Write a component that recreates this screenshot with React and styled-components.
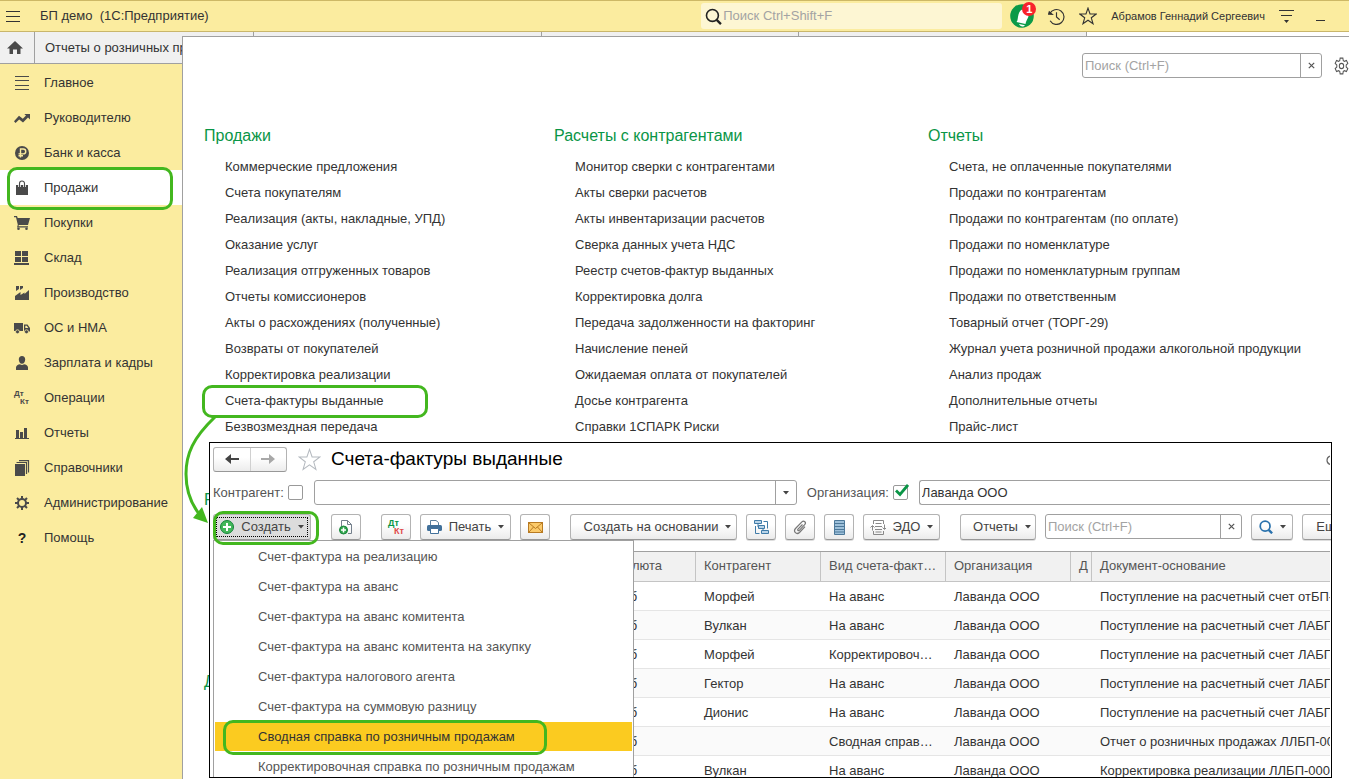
// Core
import React from 'react';
import styled, { createGlobalStyle, css } from 'styled-components';

const GREEN = '#43b71f';

const GlobalStyle = createGlobalStyle`
    * {
        box-sizing: border-box;
    }

    body {
        margin: 0;
        overflow: hidden;
        background-color: #fff;
        color: #333;
        font-family: 'Liberation Sans', Arial, sans-serif;
        font-size: 13px;
        line-height: 16px;
    }

    button,
    input {
        margin: 0;
        padding: 0;
        border: 0;
        background: none;
        color: inherit;
        font: inherit;
    }

    svg {
        display: block;
        flex: none;
    }

    ul {
        margin: 0;
        padding: 0;
        list-style: none;
    }

    a {
        color: inherit;
        text-decoration: none;
    }

    ::placeholder {
        color: #a3a3a3;
        opacity: 1;
    }
`;

const Page = styled.div`
    display: flex;
    flex-direction: column;
    height: 100vh;
    overflow: hidden;
`;

const Header = styled.header`
    display: flex;
    flex: none;
    align-items: center;
    height: 32px;
    padding: 0 24px 0 6px;
    border-top: 1px solid #cdb866;
    border-bottom: 1px solid #c9b66b;
    background-color: #fbec9f;
`;

const AppTitle = styled.h1`
    flex: 1;
    margin: 0 0 0 20px;
    font-size: 13px;
    font-weight: normal;
    white-space: pre;
`;

const HeaderSearch = styled.label`
    display: flex;
    align-items: center;
    width: 301px;
    height: 26px;
    padding-left: 4px;
    border-radius: 3px;
    background-color: #fdf6d3;

    input {
        flex: 1;
        min-width: 0;
        margin-left: 1px;
    }
`;

const HeaderTools = styled.div`
    display: flex;
    align-items: center;
    gap: 14px;
    margin-left: 8px;
    color: #333;
`;

const HeaderButton = styled.button`
    position: relative;
    display: flex;
`;

const Badge = styled.span`
    position: absolute;
    top: -1px;
    right: -2px;
    width: 14px;
    height: 14px;
    border-radius: 50%;
    background-color: #f8232b;
    color: #fff;
    font-size: 11px;
    font-weight: bold;
    line-height: 14px;
    text-align: center;
`;

const UserName = styled.a`
    font-size: 11px;
`;

const Tabs = styled.nav`
    display: flex;
    flex: none;
    height: 32px;
    border-bottom: 1px solid #a0a0a0;
`;

const Tab = styled.button`
    flex: none;
    width: ${ props => props.$width }px;
    padding-left: 10px;
    overflow: hidden;
    border-right: 1px solid #a0a0a0;
    background-color: #f0f0f0;
    text-align: left;
    white-space: nowrap;
`;

const HomeTab = styled(Tab)`
    padding-left: 7px;
`;

const Body = styled.div`
    display: flex;
    flex: 1;
    min-height: 0;
`;

const Sidebar = styled.nav`
    flex: none;
    width: 182px;
    padding-top: 1px;
    background-color: #fbec9f;
`;

const SidebarLink = styled.a`
    position: relative;
    display: flex;
    align-items: center;
    gap: 14px;
    height: 35px;
    padding-left: 14px;
    ${ props => props.$active && css`
        background-color: #fff;
    ` };

    svg {
        color: #4a4a4a;
    }
`;

const Highlight = styled.span`
    position: absolute;
    inset: ${ props => props.$inset };
    z-index: 3;
    border: 3px solid ${ GREEN };
    border-radius: 10px;
    pointer-events: none;
`;

const Panel = styled.main`
    position: relative;
    flex: 1;
    min-width: 0;
    margin-top: -28px;
    overflow: hidden;
    border-top: 1px solid #a0a0a0;
    border-left: 1px solid #a0a0a0;
    background-color: #fff;
`;

const PanelTools = styled.div`
    display: flex;
    align-items: center;
    justify-content: flex-end;
    gap: 12px;
    padding-top: 16px;
    color: #555;
`;

const Field = styled.div`
    display: flex;
    flex: ${ props => props.$width ? 'none' : 1 };
    width: ${ props => props.$width ? `${props.$width}px` : 'auto' };
    height: 25px;
    border: 1px solid #a0a0a0;
    border-right-width: ${ props => props.$open ? 0 : 1 }px;
    border-radius: ${ props => props.$open ? '3px 0 0 3px' : '3px' };
    background-color: #fff;

    input {
        flex: 1;
        min-width: 0;
        padding-left: 2px;
    }
`;

const FieldButton = styled.button`
    display: flex;
    align-items: center;
    justify-content: center;
    width: 21px;
    border-left: 1px solid #a0a0a0;
    color: #444;
`;

const Sections = styled.div`
    display: grid;
    grid-template-columns: 350px 374px 1fr;
    padding: 45px 0 0 21px;
`;

const SectionTitle = styled.h2`
    margin: 0 0 5px;
    color: #0a9546;
    font-size: 16px;
    font-weight: normal;
    line-height: 26px;
`;

const SectionList = styled.ul`
    min-height: 104px;
    margin-bottom: 47px;
    padding-left: 21px;
    line-height: 26px;
    white-space: nowrap;
`;

const SectionLink = styled.a`
    position: relative;
    display: inline-block;
`;

const Arrow = styled.svg`
    position: absolute;
    top: 379px;
    left: 0;
    z-index: 2;
`;

const Window = styled.section`
    position: absolute;
    inset: 405px 17px 1px 26px;
    padding: 3px 1px 0 3px;
    overflow: hidden;
    border: 1px solid #000;
    background-color: #fff;
`;

const TitleRow = styled.div`
    display: flex;
    align-items: center;
    height: 26px;
    color: #555;
`;

const NavButtons = styled.div`
    display: flex;
    width: 74px;
    height: 25px;
    margin-right: 11px;
    border: 1px solid #b3b3b3;
    border-bottom-color: #989898;
    border-radius: 3px;
    background: linear-gradient(#fff 40%, #ececec);

    button {
        display: flex;
        flex: 1;
        align-items: center;
        justify-content: center;
        color: #444;
    }

    button + button {
        border-left: 1px solid #d0d0d0;
        color: #a8a8a8;
    }
`;

const WindowTitle = styled.h2`
    flex: 1;
    margin: 0 0 0 10px;
    color: #000;
    font-size: 19px;
    font-weight: normal;
    line-height: 24px;
`;

const FilterRow = styled.div`
    display: flex;
    align-items: center;
    margin-top: 8px;
`;

const FilterLabel = styled.label`
    display: flex;
    align-items: center;
    gap: 4px;
    margin-right: 11px;
    color: #555;
    white-space: nowrap;

    ${ Field } + & {
        margin-left: 10px;
    }
`;

const CheckBox = styled.span`
    position: relative;
    display: flex;

    input {
        width: 15px;
        height: 15px;
        border: 1px solid #999;
        border-radius: 2px;
        appearance: none;
    }

    svg {
        position: absolute;
        top: -1px;
        left: 2px;
        display: none;
    }

    input:checked + svg {
        display: block;
    }
`;

const Toolbar = styled.div`
    display: flex;
    gap: 20px;
    margin-top: 9px;
`;

const ToolGroup = styled.div`
    position: relative;
    display: flex;
    flex: none;
    gap: 9px;
`;

const ToolButton = styled.button`
    display: flex;
    flex: none;
    align-items: center;
    justify-content: center;
    gap: 7px;
    width: ${ props => props.$width || 30 }px;
    height: 26px;
    border: 1px solid #b3b3b3;
    border-bottom-color: #989898;
    border-radius: 3px;
    background: linear-gradient(#fff 40%, #ebebeb);
    box-shadow: 0 1px 0 #ddd;
    color: #444;
    white-space: nowrap;
`;

const TextButton = styled(ToolButton)`
    padding-left: 8px;
`;

const CreateButton = styled(ToolButton)`
    background: #dcdcdc;
    outline: 1px dotted #000;
    outline-offset: -4px;
`;

const Postings = styled.span`
    display: flex;
    flex-direction: column;
    color: #0a9546;
    font-size: 9px;
    font-weight: bold;
    line-height: 8px;
    text-align: left;

    span + span {
        padding-left: 6px;
        color: ${ props => props.$plain ? 'inherit' : '#e04a4a' };
    }
    ${ props => props.$plain && css`
        width: 16px;
        color: #4a4a4a;
        font-size: 8px;
    ` };
`;

const HelpMark = styled.span`
    width: 16px;
    color: #222;
    font-size: 14px;
    font-weight: bold;
    text-align: center;
`;

const Menu = styled.ul`
    position: absolute;
    top: 97px;
    left: 3px;
    width: 421px;
    padding: 1px;
    border: 1px solid #a0a0a0;
    background-color: #fff;
`;

const MenuItem = styled.button`
    position: relative;
    display: block;
    width: 100%;
    height: 29px;
    margin-bottom: 1px;
    padding-left: 43px;
    background-color: ${ props => props.$selected ? '#fbcb20' : 'transparent' };
    color: ${ props => props.$selected ? '#333' : '#555' };
    text-align: left;
`;

const Table = styled.table`
    width: 100%;
    margin-top: 11px;
    border-collapse: separate;
    border-spacing: 0;
    border-top: 1px solid #a0a0a0;
    table-layout: fixed;

    th,
    td {
        height: 29px;
        padding: 1px 8px 0;
        overflow: hidden;
        border-bottom: 1px solid #e5e5e5;
        font-weight: normal;
        text-align: left;
        text-overflow: ellipsis;
        white-space: nowrap;
    }

    th {
        height: 30px;
        padding-top: 0;
        padding-bottom: 1px;
        border-right: 1px solid #c4c4c4;
        border-bottom-color: #c4c4c4;
        background-color: #f1f1f1;
        color: #555;
    }

    th:nth-last-child(-n + 2) {
        text-overflow: clip;
    }

    th:last-child,
    td:last-child {
        padding-right: 0;
        border-right: 0;
        text-overflow: clip;
    }

    tbody tr:nth-child(even) {
        background-color: #fafafa;
    }
`;

const Icon = ({ size = 16, children }) => (
    <svg width = { size } height = { size } viewBox = '0 0 16 16' fill = 'currentColor' aria-hidden = 'true'>
        { children }
    </svg>
);

const Caret = () => (
    <svg width = '6' height = '4' viewBox = '0 0 6 4' fill = '#444' aria-hidden = 'true'>
        <path d = 'M0 0h6L3 3.5z' />
    </svg>
);

const Cross = () => (
    <svg width = '7' height = '7' viewBox = '0 0 7 7' stroke = '#555' strokeWidth = '1.2' aria-hidden = 'true'>
        <path d = 'M.8.8l5.4 5.4M6.2.8L.8 6.2' />
    </svg>
);

const Lens = ({ size = 16, color = '#222', width = 1.5 }) => (
    <svg width = { size } height = { size } viewBox = '0 0 16 16' fill = 'none' stroke = { color } strokeWidth = { width } aria-hidden = 'true'>
        <circle cx = '7' cy = '7' r = '5.6' />
        <path d = 'M11 11.2l4 4' strokeWidth = { width + 0.7 } />
    </svg>
);

const Star = ({ size, color, width }) => (
    <svg width = { size } height = { size } viewBox = '0 0 24 24' fill = 'none' stroke = { color } strokeWidth = { width } aria-hidden = 'true'>
        <path d = 'M12 1.5l2.7 7.8 8.2.1-6.5 5 2.3 7.9-6.7-4.7-6.7 4.7 2.3-7.9-6.5-5 8.2-.1z' />
    </svg>
);

const Gear = () => (
    <svg width = '15' height = '18' viewBox = '0 0 24 24' preserveAspectRatio = 'none' fill = 'none' stroke = '#555' strokeWidth = '1.6' aria-hidden = 'true'>
        <circle cx = '12' cy = '12' r = '3.5' />
        <path d = 'M9.8 1.5h4.4l.6 3.3 2 1.1 3.1-1.2 2.2 3.8-2.6 2.2v2.6l2.6 2.2-2.2 3.8-3.1-1.2-2 1.1-.6 3.3H9.8l-.6-3.3-2-1.1-3.1 1.2-2.2-3.8 2.6-2.2v-2.6L1.9 8.5l2.2-3.8 3.1 1.2 2-1.1z' />
    </svg>
);

const Bell = () => (
    <svg width = '24' height = '26' viewBox = '0 0 24 26' aria-hidden = 'true'>
        <circle cx = '12' cy = '13' r = '11.8' fill = '#0c9a48' />
        <path d = 'M6.500 19c1.500-1.500 1-4 2-7.500C9.300 8 11.500 6 14 6.500c3 .800 5 3.500 4.500 6.500-.4 2.500-2 3.500-3 8z' fill = '#fff' />
        <path d = 'M9 21l6 1.200c-1.500 2-5 1.600-6-1.200z' fill = '#fff' />
    </svg>
);

const sidebarItems = [
    {
        title: 'Главное',
        icon:  <Icon><path d = 'M1 1h14v1H1zM1 5h14v1H1zM1 10h14v1H1zM1 14h14v1H1z' /></Icon>,
    },
    {
        title: 'Руководителю',
        icon:  <Icon><path d = 'M0 11.200l5-5.400 3.800 3 3.200-3.300L10.300 4H16v5.500l-2-2-5 5-3.800-3L1.500 13z' /></Icon>,
    },
    {
        title: 'Банк и касса',
        icon:  (
            <Icon>
                <circle cx = '8' cy = '8' r = '7' />
                <path d = 'M6.500 12.500V4h2.800a2.400 2.400 0 010 4.900H4.500M4.500 10.700h4.500' fill = 'none' stroke = '#fbec9f' strokeWidth = '1.4' />
            </Icon>
        ),
    },
    {
        title:  'Продажи',
        active: true,
        icon:   (
            <Icon>
                <path d = 'M2 5h12v10H2z' />
                <path d = 'M5.500 7V3.500a2.500 2.500 0 015 0V7' fill = 'none' stroke = '#fff' strokeWidth = '2.6' />
                <path d = 'M5.500 7V3.500a2.500 2.500 0 015 0V7' fill = 'none' stroke = 'currentColor' strokeWidth = '1.1' />
            </Icon>
        ),
    },
    {
        title: 'Покупки',
        icon:  (
            <Icon>
                <path d = 'M0 1h3l.7 2H16l-2 7H4.800l-.3 1.200H14v1.300H3l.8-2.700L2 2.300H0z' />
                <circle cx = '4.500' cy = '13.800' r = '1.300' />
                <circle cx = '12.500' cy = '13.800' r = '1.300' />
            </Icon>
        ),
    },
    {
        title: 'Склад',
        icon:  <Icon><path d = 'M1 1h6v5H1zM8 1h6v5H8zM1 7h6v5H1zM8 7h6v5H8zM0 13h15v2H0z' /></Icon>,
    },
    {
        title: 'Производство',
        icon:  <Icon><path d = 'M1 15v-4l5.500-4v3L10.500 7.500V9L15 5v10zM2 1h3v3L2 6zM6 1h3v2L6 5z' /></Icon>,
    },
    {
        title: 'ОС и НМА',
        icon:  (
            <Icon>
                <path d = 'M0 3h9v8H0zM10 4.500h3.500L16 8v3.500h-6zM11.300 5.800V8h3l-1.500-2.200z' fillRule = 'evenodd' />
                <circle cx = '3.500' cy = '11.800' r = '2' stroke = '#fbec9f' strokeWidth = '.8' />
                <circle cx = '12.500' cy = '11.800' r = '2' stroke = '#fbec9f' strokeWidth = '.8' />
            </Icon>
        ),
    },
    {
        title: 'Зарплата и кадры',
        icon:  <Icon><path d = 'M8 1c2 0 3.200 1.300 3.200 3.400S9.900 8.800 8 8.800 4.800 6.500 4.800 4.400 6 1 8 1zM2 15v-2.500C2 10.500 4 9.600 6 9.300c1 .9 3 .9 4 0 2 .3 4 1.200 4 3.200V15z' /></Icon>,
    },
    {
        title: 'Операции',
        icon:  <Postings $plain><span>Дт</span><span>Кт</span></Postings>,
    },
    {
        title: 'Отчеты',
        icon:  <Icon><path d = 'M2 5h3v8H2zM6 7h3v6H6zM10 3h3v10h-3zM1 13h14v1H1z' /></Icon>,
    },
    {
        title: 'Справочники',
        icon:  (
            <Icon>
                <path d = 'M1 4h10v12H1z' />
                <path d = 'M2.500 2.500h10V14M5 .600h9.500V12.500' fill = 'none' stroke = 'currentColor' strokeWidth = '1.200' />
            </Icon>
        ),
    },
    {
        title: 'Администрирование',
        icon:  (
            <Icon>
                <circle cx = '8' cy = '8' r = '4' fill = 'none' stroke = 'currentColor' strokeWidth = '2' />
                <path d = 'M8 1v3M8 12v3M1 8h3M12 8h3M3 3l2.200 2.200M10.800 10.800L13 13M13 3l-2.200 2.200M5.200 10.800L3 13' stroke = 'currentColor' strokeWidth = '2' />
            </Icon>
        ),
    },
    {
        title: 'Помощь',
        icon:  <HelpMark>?</HelpMark>,
    },
];

const columns = [
    [
        {
            title: 'Продажи',
            items: [
                'Коммерческие предложения',
                'Счета покупателям',
                'Реализация (акты, накладные, УПД)',
                'Оказание услуг',
                'Реализация отгруженных товаров',
                'Отчеты комиссионеров',
                'Акты о расхождениях (полученные)',
                'Возвраты от покупателей',
                'Корректировка реализации',
                'Счета-фактуры выданные',
                'Безвозмездная передача',
            ],
        },
        { title: 'Розничные продажи', items: []},
        { title: 'Дополнительно', items: []},
    ],
    [
        {
            title: 'Расчеты с контрагентами',
            items: [
                'Монитор сверки с контрагентами',
                'Акты сверки расчетов',
                'Акты инвентаризации расчетов',
                'Сверка данных учета НДС',
                'Реестр счетов-фактур выданных',
                'Корректировка долга',
                'Передача задолженности на факторинг',
                'Начисление пеней',
                'Ожидаемая оплата от покупателей',
                'Досье контрагента',
                'Справки 1СПАРК Риски',
            ],
        },
    ],
    [
        {
            title: 'Отчеты',
            items: [
                'Счета, не оплаченные покупателями',
                'Продажи по контрагентам',
                'Продажи по контрагентам (по оплате)',
                'Продажи по номенклатуре',
                'Продажи по номенклатурным группам',
                'Продажи по ответственным',
                'Товарный отчет (ТОРГ-29)',
                'Журнал учета розничной продажи алкогольной продукции',
                'Анализ продаж',
                'Дополнительные отчеты',
                'Прайс-лист',
            ],
        },
    ],
];

const createMenu = [
    'Счет-фактура на реализацию',
    'Счет-фактура на аванс',
    'Счет-фактура на аванс комитента',
    'Счет-фактура на аванс комитента на закупку',
    'Счет-фактура налогового агента',
    'Счет-фактура на суммовую разницу',
    'Сводная справка по розничным продажам',
    'Корректировочная справка по розничным продажам',
];

const invoices = [
    ['Морфей', 'На аванс', 'Поступление на расчетный счет отБП-000001'],
    ['Вулкан', 'На аванс', 'Поступление на расчетный счет ЛАБП-000002'],
    ['Морфей', 'Корректировочный', 'Поступление на расчетный счет ЛАБП-000003'],
    ['Гектор', 'На аванс', 'Поступление на расчетный счет ЛАБП-000004'],
    ['Дионис', 'На аванс', 'Поступление на расчетный счет ЛАБП-000005'],
    ['', 'Сводная справка по продажам', 'Отчет о розничных продажах ЛЛБП-000001'],
    ['Вулкан', 'На аванс', 'Корректировка реализации ЛЛБП-000001'],
];

const AppHeader = () => (
    <Header>
        <HeaderButton aria-label = 'Меню'>
            <svg width = '14' height = '11' viewBox = '0 0 14 11' fill = '#333'>
                <path d = 'M0 0h14v1H0zM0 5h14v1H0zM0 10h14v1H0z' />
            </svg>
        </HeaderButton>
        <AppTitle>{ 'БП демо  (1С:Предприятие)' }</AppTitle>
        <HeaderSearch>
            <Lens size = { 17 } />
            <input type = 'text' placeholder = 'Поиск Ctrl+Shift+F' aria-label = 'Поиск' />
        </HeaderSearch>
        <HeaderTools>
            <HeaderButton aria-label = 'Уведомления'>
                <Bell />
                <Badge>1</Badge>
            </HeaderButton>
            <HeaderButton aria-label = 'История'>
                <svg width = '17' height = '17' viewBox = '0 0 16 16' fill = 'none' stroke = '#333' strokeWidth = '1.1'>
                    <path d = 'M1.700 5.500A7 7 0 112 12M8 4v4.500l3 2.500M.500 5.800l3.500.2-2.800-2.500z' />
                </svg>
            </HeaderButton>
            <HeaderButton aria-label = 'Избранное'>
                <Star size = { 18 } color = '#333' width = { 1.5 } />
            </HeaderButton>
            <UserName href = '#user'>Абрамов Геннадий Сергеевич</UserName>
            <HeaderButton aria-label = 'Настройки'>
                <svg width = '15' height = '13' viewBox = '0 0 15 13' fill = '#333'>
                    <path d = 'M0 0h15v1H0zM2 5h11v1H2zM5 10h5l-2.500 3z' />
                </svg>
            </HeaderButton>
            <HeaderButton aria-label = 'Свернуть'>
                <svg width = '17' height = '11' viewBox = '0 0 17 11' fill = '#333'>
                    <path d = 'M8 9h9v1H8z' />
                </svg>
            </HeaderButton>
        </HeaderTools>
    </Header>
);

const InvoiceTable = () => (
    <Table>
        <colgroup>
            <col width = '395' />
            <col width = '88' />
            <col width = '125' />
            <col width = '125' />
            <col width = '125' />
            <col width = '21' />
            <col />
        </colgroup>
        <thead>
            <tr>
                <th />
                <th>Валюта</th>
                <th>Контрагент</th>
                <th>Вид счета-фактуры</th>
                <th>Организация</th>
                <th>Д</th>
                <th>Документ-основание</th>
            </tr>
        </thead>
        <tbody>
            { invoices.map(([partner, kind, source], index) => (
                <tr key = { index }>
                    <td />
                    <td>руб</td>
                    <td>{ partner }</td>
                    <td>{ kind }</td>
                    <td>Лаванда ООО</td>
                    <td />
                    <td>{ source }</td>
                </tr>
            )) }
        </tbody>
    </Table>
);

const InvoiceToolbar = () => (
    <Toolbar>
        <ToolGroup>
            <CreateButton $width = { 98 }>
                <svg width = '14' height = '14' viewBox = '0 0 14 14'>
                    <circle cx = '7' cy = '7' r = '6.500' fill = '#43b75a' stroke = '#16853a' />
                    <path d = 'M7 3v8M3 7h8' stroke = '#fff' strokeWidth = '2' />
                </svg>
                Создать
                <Caret />
            </CreateButton>
            <Highlight $inset = '-3px -8px -5px 0' />
        </ToolGroup>
        <ToolGroup>
            <ToolButton aria-label = 'Скопировать'>
                <svg width = '14' height = '16' viewBox = '0 0 14 16' fill = 'none'>
                    <path d = 'M2.500 7V1.500h6l4 4v9H9' stroke = '#74808c' />
                    <path d = 'M8.500 1.500v4h4' stroke = '#74808c' />
                    <circle cx = '4.500' cy = '11' r = '4' fill = '#2fa44a' stroke = '#16853a' />
                    <path d = 'M4.500 8.500v5M2 11h5' stroke = '#fff' strokeWidth = '1.500' />
                </svg>
            </ToolButton>
        </ToolGroup>
        <ToolGroup>
            <ToolButton aria-label = 'Дт Кт'>
                <Postings><span>Дт</span><span>Кт</span></Postings>
            </ToolButton>
            <ToolButton $width = { 91 }>
                <svg width = '15' height = '14' viewBox = '0 0 15 14'>
                    <path d = 'M3.500 5V.500H9l2.500 2V5' fill = '#fff' stroke = '#5b7f9c' />
                    <rect y = '5' width = '15' height = '6' rx = '1.500' fill = '#41709a' />
                    <path d = 'M3.500 8.500h8v5h-8z' fill = '#fff' stroke = '#41709a' />
                </svg>
                Печать
                <Caret />
            </ToolButton>
            <ToolButton aria-label = 'Отправить'>
                <svg width = '15' height = '11' viewBox = '0 0 15 11' stroke = '#b87a22'>
                    <rect x = '.500' y = '.500' width = '14' height = '10' fill = '#fbca6a' />
                    <path d = 'M1 1l6.500 5.500L14 1M1 10l4.500-5M14 10L9.500 5' fill = 'none' />
                </svg>
            </ToolButton>
        </ToolGroup>
        <ToolGroup>
            <TextButton $width = { 167 }>
                Создать на основании
                <Caret />
            </TextButton>
            <ToolButton aria-label = 'Структура подчиненности'>
                <svg width = '15' height = '15' viewBox = '0 0 15 15' fill = '#b9d4e8' stroke = '#3f7ba8'>
                    <path d = 'M.500.500h7v3h-7zM4.500 5.500h6v3h-6zM7.500 10.500h7v3h-7z' />
                    <path d = 'M9.500 1.500h4v7M1.500 6v7.500h4M4 3.500V7M9 8.500v2' fill = 'none' />
                </svg>
            </ToolButton>
            <ToolButton aria-label = 'Присоединенные файлы'>
                <svg width = '15' height = '15' viewBox = '0 0 15 15' fill = 'none' stroke = '#777' strokeWidth = '1.200'>
                    <path d = 'M9.500 4.500L5 9.200c-.8 1 .5 2 1.300 1.200l5.400-5.700c2-2.200-.8-4.800-2.800-2.800L2.500 8.500c-2.600 3 1 6.600 4 4l5.500-5.800' />
                </svg>
            </ToolButton>
            <ToolButton aria-label = 'Реестр'>
                <svg width = '11' height = '15' viewBox = '0 0 11 15' fill = '#9dc0da' stroke = '#4c7899'>
                    <path d = 'M.500.500h10v14H.500zM.500 3.500h10M.500 6.500h10M.500 9.500h10M.500 12h10' />
                </svg>
            </ToolButton>
            <ToolButton $width = { 77 }>
                <svg width = '16' height = '15' viewBox = '0 0 16 15' fill = 'none' stroke = '#888'>
                    <path d = 'M3.500 4V.500h10V4M3.500 11v3.500h10V11M5.500 3.500h6M5 6.500h7M5 9.500h7M5.500 12h6M2.500 10.500V6M.500 7.500l2-2 2 2M14.500 4.500V9M12.500 7.500l2 2 2-2' />
                </svg>
                ЭДО
                <Caret />
            </ToolButton>
        </ToolGroup>
        <ToolGroup>
            <TextButton $width = { 76 }>
                Отчеты
                <Caret />
            </TextButton>
            <Field $width = { 197 }>
                <input type = 'text' placeholder = 'Поиск (Ctrl+F)' aria-label = 'Поиск в списке' />
                <FieldButton aria-label = 'Очистить'><Cross /></FieldButton>
            </Field>
            <ToolButton $width = { 42 } aria-label = 'Найти'>
                <Lens size = { 14 } color = '#2a72ad' width = { 2 } />
                <Caret />
            </ToolButton>
            <TextButton $width = { 60 }>
                Еще
                <Caret />
            </TextButton>
        </ToolGroup>
    </Toolbar>
);

const InvoiceWindow = () => (
    <Window>
        <TitleRow>
            <NavButtons>
                <button aria-label = 'Назад'>
                    <svg width = '14' height = '10' viewBox = '0 0 14 10' fill = 'currentColor'>
                        <path d = 'M0 5l6-5v4h8v2H6v4z' />
                    </svg>
                </button>
                <button aria-label = 'Вперед'>
                    <svg width = '14' height = '10' viewBox = '0 0 14 10' fill = 'currentColor'>
                        <path d = 'M14 5L8 0v4H0v2h8v4z' />
                    </svg>
                </button>
            </NavButtons>
            <Star size = { 23 } color = '#b4b9bf' width = { 1.1 } />
            <WindowTitle>Счета-фактуры выданные</WindowTitle>
            <svg width = '4' height = '12' viewBox = '0 0 4 12' fill = 'none' stroke = '#666' strokeWidth = '1.200'>
                <path d = 'M4 3C0 4.500 0 10 4 11.500' />
            </svg>
        </TitleRow>
        <FilterRow>
            <FilterLabel>
                Контрагент:
                <CheckBox>
                    <input type = 'checkbox' />
                </CheckBox>
            </FilterLabel>
            <Field $width = { 483 }>
                <input type = 'text' aria-label = 'Контрагент' />
                <FieldButton aria-label = 'Выбрать'><Caret /></FieldButton>
            </Field>
            <FilterLabel>
                Организация:
                <CheckBox>
                    <input type = 'checkbox' defaultChecked />
                    <svg width = '14' height = '13' viewBox = '0 0 14 13' fill = 'none' stroke = '#0a9546' strokeWidth = '2.800'>
                        <path d = 'M1 6.500l4 4L13 1' />
                    </svg>
                </CheckBox>
            </FilterLabel>
            <Field $open>
                <input type = 'text' defaultValue = 'Лаванда ООО' aria-label = 'Организация' />
            </Field>
        </FilterRow>
        <InvoiceToolbar />
        <InvoiceTable />
        <Menu>
            { createMenu.map((title, index) => (
                <li key = { title }>
                    <MenuItem $selected = { index === 6 }>
                        { title }
                        { index === 6 && <Highlight $inset = '-2px 85px -4px 8px' /> }
                    </MenuItem>
                </li>
            )) }
        </Menu>
    </Window>
);

const App = () => (
    <Page>
        <GlobalStyle />
        <AppHeader />
        <Tabs>
            <HomeTab $width = { 35 } aria-label = 'Начальная страница'>
                <svg width = '16' height = '14' viewBox = '0 0 16 14' fill = '#4a4a4a'>
                    <path d = 'M8 0l8 7.500h-2.500V13H10V8.500H6V13H2.500V7.500H0z' />
                </svg>
            </HomeTab>
            <Tab $width = { 219 }>Отчеты о розничных продажах</Tab>
            <Tab $width = { 288 } />
            <Tab $width = { 257 } />
            <Tab $width = { 288 } />
        </Tabs>
        <Body>
            <Sidebar>
                { sidebarItems.map(({ title, icon, active }) => (
                    <SidebarLink key = { title } href = '#section' $active = { active }>
                        { icon }
                        { title }
                        { active && <Highlight $inset = '-3px 9px -5px 7px' /> }
                    </SidebarLink>
                )) }
            </Sidebar>
            <Panel>
                <PanelTools>
                    <Field $width = { 240 }>
                        <input type = 'text' placeholder = 'Поиск (Ctrl+F)' aria-label = 'Поиск по разделу' />
                        <FieldButton aria-label = 'Очистить'><Cross /></FieldButton>
                    </Field>
                    <Gear />
                </PanelTools>
                <Sections>
                    { columns.map((sections, column) => (
                        <div key = { column }>
                            { sections.map(({ title, items }) => (
                                <section key = { title }>
                                    <SectionTitle>{ title }</SectionTitle>
                                    <SectionList>
                                        { items.map((item) => (
                                            <li key = { item }>
                                                <SectionLink href = '#item'>
                                                    { item }
                                                    { item === 'Счета-фактуры выданные' && (
                                                        <Highlight $inset = '-3px -44px -4px -23px' />
                                                    ) }
                                                </SectionLink>
                                            </li>
                                        )) }
                                    </SectionList>
                                </section>
                            )) }
                        </div>
                    )) }
                </Sections>
                <InvoiceWindow />
                <Arrow width = '40' height = '112' viewBox = '0 0 40 112' aria-hidden = 'true'>
                    <path d = 'M32 1C10 22 3 38 3 58c0 18 5 30 14 41' fill = 'none' stroke = { GREEN } strokeWidth = '3' />
                    <path d = 'M25 107L10 102 19 91z' fill = { GREEN } />
                </Arrow>
            </Panel>
        </Body>
    </Page>
);

export default App;
